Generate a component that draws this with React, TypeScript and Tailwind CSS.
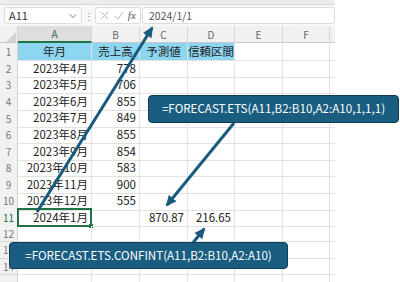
import React from "react";

const COLS = ["A", "B", "C", "D", "E", "F"];
const GRID = "grid grid-cols-[18px_74px_48px_48px_47px_48px_47px_5px]";

const rows: string[][] = [
  ["年月", "売上高", "予測値", "信頼区間", "", ""],
  ["2023年4月", "778", "", "", "", ""],
  ["2023年5月", "706", "", "", "", ""],
  ["2023年6月", "855", "", "", "", ""],
  ["2023年7月", "849", "", "", "", ""],
  ["2023年8月", "855", "", "", "", ""],
  ["2023年9月", "854", "", "", "", ""],
  ["2023年10月", "583", "", "", "", ""],
  ["2023年11月", "900", "", "", "", ""],
  ["2023年12月", "555", "", "", "", ""],
  ["2024年1月", "", "870.87", "216.65", "", ""],
  ["", "", "", "", "", ""],
  ["", "", "", "", "", ""],
  ["", "", "", "", "", ""],
  ["", "", "", "", "", ""],
];

function FormulaBar() {
  return (
    <div className="flex h-[21px] items-center bg-[#f7f7f7] pl-[4px] text-[11px] text-[#333]">
      <div className="flex h-[17px] w-[78px] items-center justify-between rounded-[3px] border border-[#dcdcdc] bg-white pl-[4px] pr-[4px]">
        <span>A11</span>
        <svg width="8" height="6" viewBox="0 0 8 6" fill="none" stroke="#777" strokeWidth="1">
          <path d="M1 1.5l3 3 3-3" />
        </svg>
      </div>
      <span className="w-[13px] text-center text-[10px] text-[#888]">⋮</span>
      <div className="flex h-[17px] w-[46px] items-center justify-around rounded-[3px] border border-[#dcdcdc] bg-white px-[2px] text-[#aaa]">
        <svg width="9" height="9" viewBox="0 0 9 9" stroke="#bbb" strokeWidth="1">
          <path d="M1 1l7 7M8 1l-7 7" />
        </svg>
        <svg width="10" height="9" viewBox="0 0 10 9" fill="none" stroke="#bbb" strokeWidth="1">
          <path d="M1 5l3 3 5-7" />
        </svg>
        <span className="font-['Liberation_Serif',serif] text-[11px] italic text-[#555]">fx</span>
      </div>
      <div className="ml-[1px] flex h-[17px] flex-1 items-center rounded-[3px] border border-[#dcdcdc] bg-white pl-[6px] text-[10.5px] text-[#555]">
        2024/1/1
      </div>
    </div>
  );
}

function HeaderRow() {
  return (
    <div className={`${GRID} h-[17px] border-b border-[#c8c8c8] bg-[#f1f1f1] text-[10px] text-[#666]`}>
      <div className="relative border-r border-[#d6d6d6]">
        <svg className="absolute bottom-[1px] right-[1px]" width="10" height="10" viewBox="0 0 10 10">
          <path d="M10 0L10 10L0 10Z" fill="#d4d4d4" />
        </svg>
      </div>
      {COLS.map((c) => (
        <div
          key={c}
          className={`flex items-center justify-center border-r border-[#d6d6d6] ${
            c === "A" ? "border-b-2 border-b-[#217346] bg-[#dedede] text-[#217346]" : ""
          }`}
        >
          {c}
        </div>
      ))}
      <div />
    </div>
  );
}

function Row({ n, cells }: { n: number; cells: string[] }) {
  const header = n === 1;
  return (
    <div className={`${GRID} h-[16.6px] text-[11.5px] text-[#222]`}>
      <div
        className={`flex items-center justify-center border-r border-b border-[#d6d6d6] bg-[#f1f1f1] text-[10px] ${
          n === 11 ? "text-[#217346]" : "text-[#777]"
        }`}
      >
        {n < 15 ? n : ""}
      </div>
      {cells.map((v, i) => (
        <div
          key={i}
          className={`relative flex items-center border-r border-b border-[#e2e2e2] px-[3px] ${
            header && i < 4 ? "justify-center bg-[#8dd6f2]" : "justify-end"
          }`}
        >
          {n === 11 && i === 0 && (
            <span className="absolute -top-px -left-px -right-px -bottom-px border-2 border-[#217346]">
              <span className="absolute -right-[3px] -bottom-[3px] h-[4px] w-[4px] bg-[#217346]" />
            </span>
          )}
          <span className="relative whitespace-nowrap">{v}</span>
        </div>
      ))}
      <div className="border-b border-[#e2e2e2]" />
    </div>
  );
}

export default function App() {
  return (
    <div className="relative h-[282px] w-[400px] overflow-hidden bg-white font-['Noto_Sans_CJK_JP','Noto_Sans',sans-serif]">
      <div className="w-[335px]">
        <div className="h-[5px] border-b border-[#d8d8d8] bg-[#ececec]" />
        <FormulaBar />
        <HeaderRow />
        {rows.map((r, i) => (
          <Row key={i} n={i + 1} cells={r} />
        ))}
      </div>

      <svg className="pointer-events-none absolute inset-0" width="400" height="282" viewBox="0 0 400 282">
        <defs>
          <marker id="ah" markerUnits="userSpaceOnUse" markerWidth="12" markerHeight="12" refX="9" refY="6" orient="auto">
            <path d="M0 1L11 6L0 11Z" fill="#175b7d" />
          </marker>
        </defs>
        <g stroke="#175b7d" strokeWidth="3" fill="none">
          <line x1="37" y1="212" x2="152" y2="28" markerEnd="url(#ah)" />
          <line x1="234" y1="123" x2="167" y2="205" markerEnd="url(#ah)" />
          <line x1="192" y1="244" x2="204" y2="229" markerEnd="url(#ah)" />
        </g>
      </svg>

      <div className="absolute left-[148px] top-[95px] flex h-[28px] w-[251px] items-center justify-center rounded-[4px] border border-[#0e3c55] bg-[#195d80] text-[11.6px] text-white">
        =FORECAST.ETS(A11,B2:B10,A2:A10,1,1,1)
      </div>
      <div className="absolute left-[9px] top-[242px] flex h-[27px] w-[279px] items-center justify-center rounded-[4px] border border-[#0e3c55] bg-[#195d80] text-[11.6px] text-white">
        =FORECAST.ETS.CONFINT(A11,B2:B10,A2:A10)
      </div>
    </div>
  );
}
